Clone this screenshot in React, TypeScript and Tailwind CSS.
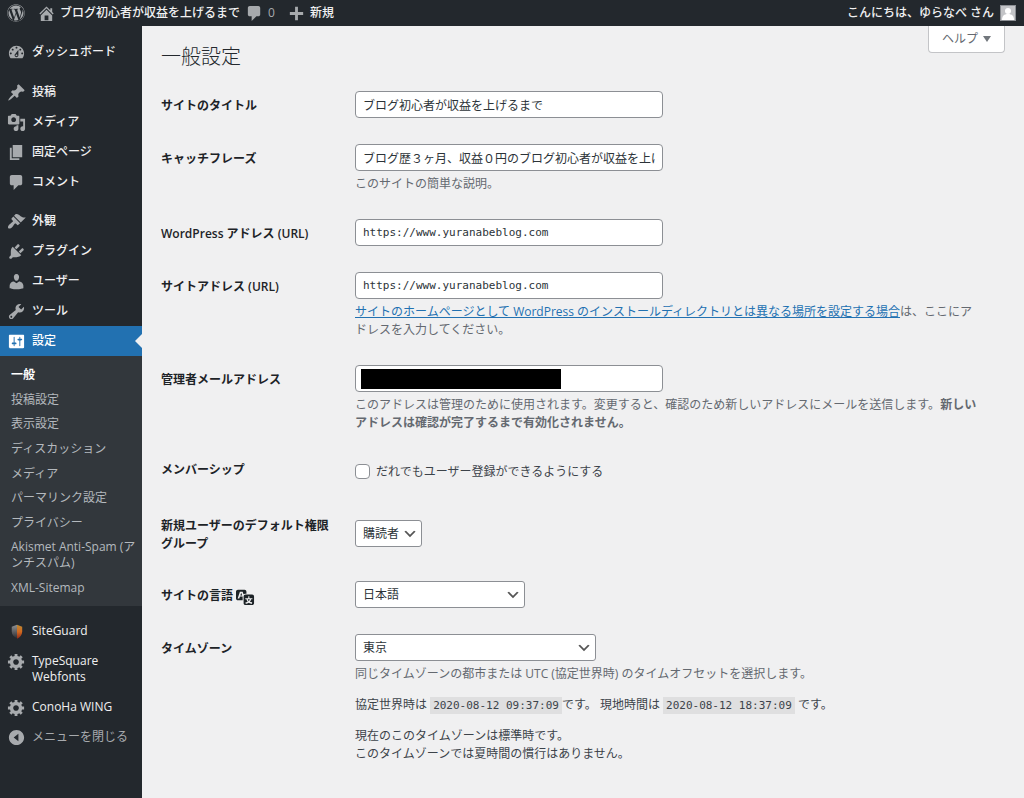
import type { ReactNode } from "react";
import { FaWordpress } from "react-icons/fa";

const icons = {
  home: "M16 8.5l1.53 1.53-1.06 1.06L10 4.6l-6.47 6.49-1.06-1.06L10 2.5l4 4v-2h2v4zm-6-2.46l6 5.99V18H4v-5.97zM12 17v-5H8v5h4z",
  comments: "M5 2h9c1.1 0 2 .9 2 2v7c0 1.1-.9 2-2 2h-2l-5 5v-5H5c-1.1 0-2-.9-2-2V4c0-1.1.9-2 2-2z",
  plus: "M17 8.5v3h-5.5V17h-3v-5.5H3v-3h5.5V3h3v5.5z",
  dashboard:
    "M3.76 16h12.48c1.1-1.37 1.76-3.11 1.76-5 0-4.42-3.58-8-8-8s-8 3.58-8 8c0 1.89.66 3.63 1.76 5zM10 4c.55 0 1 .45 1 1s-.45 1-1 1-1-.45-1-1 .45-1 1-1zM6 6c.55 0 1 .45 1 1s-.45 1-1 1-1-.45-1-1 .45-1 1-1zm8 0c.55 0 1 .45 1 1s-.45 1-1 1-1-.45-1-1 .45-1 1-1zm-5.37 5.55L12 7v6c0 1.1-.9 2-2 2s-2-.9-2-2c0-.57.24-1.08.63-1.45zM4 10c.55 0 1 .45 1 1s-.45 1-1 1-1-.45-1-1 .45-1 1-1zm12 0c.55 0 1 .45 1 1s-.45 1-1 1-1-.45-1-1 .45-1 1-1zm-5 3c0-.55-.45-1-1-1s-1 .45-1 1 .45 1 1 1 1-.45 1-1z",
  post: "M10.44 3.02l1.82-1.82 6.36 6.35-1.83 1.82c-1.05-.68-2.48-.57-3.41.36l-.75.75c-.92.93-1.04 2.35-.35 3.41l-1.83 1.82-2.41-2.41-2.8 2.79c-.42.42-3.38 2.71-3.8 2.29s1.86-3.39 2.28-3.81l2.79-2.79L4.1 9.36l1.83-1.82c1.05.69 2.48.57 3.4-.36l.75-.75c.93-.92 1.05-2.35.36-3.41z",
  media:
    "M13 11V4c0-.55-.45-1-1-1h-1.67L9 1H5L3.67 3H2c-.55 0-1 .45-1 1v7c0 .55.45 1 1 1h10c.55 0 1-.45 1-1zM7 4.5c1.38 0 2.5 1.12 2.5 2.5S8.38 9.5 7 9.5 4.5 8.38 4.5 7 5.62 4.5 7 4.5zM14 6h5v10.5c0 1.38-1.12 2.5-2.5 2.5S14 17.88 14 16.5s1.12-2.5 2.5-2.5c.17 0 .34.02.5.05V9h-3V6zm-4 8.05V13h2v3.5c0 1.38-1.12 2.5-2.5 2.5S7 17.88 7 16.5 8.12 14 9.5 14c.17 0 .34.02.5.05z",
  page: "M6 15V2h10v13H6zm-1 1h8v2H3V5h2v11z",
  appearance:
    "M14.48 11.06L7.41 3.99l1.5-1.5c.5-.56 2.3-.47 3.51.32 1.21.8 1.43 1.28 2.91 2.1 1.18.64 2.45 1.26 4.45.85zm-.71.71L6.7 4.7 4.93 6.47c-.39.39-.39 1.02 0 1.41l1.06 1.06c.39.39.39 1.03 0 1.42-.6.6-1.43 1.11-2.21 1.69-.35.26-.7.53-1.01.84C1.43 14.23.4 16.08 1.4 17.07c.99 1 2.84-.03 4.18-1.36.31-.31.58-.66.85-1.02.57-.78 1.08-1.61 1.69-2.21.39-.39 1.02-.39 1.41 0l1.06 1.06c.39.39 1.02.39 1.41 0z",
  plugins:
    "M13.11 4.36L9.87 7.6 8 5.73l3.24-3.24c.35-.34 1.05-.2 1.56.32.52.51.66 1.21.31 1.55zm-8 1.77l.91-1.12 9.01 9.01-1.19.84c-.71.71-2.63 1.16-3.82 1.16H6.14L4.9 17.26c-.59.59-1.54.59-2.12 0-.59-.58-.59-1.53 0-2.12l1.24-1.24v-3.88c0-1.13.4-3.19 1.09-3.89zm7.26 3.97l3.24-3.24c.34-.35 1.04-.21 1.55.31.52.51.66 1.21.31 1.55l-3.24 3.25z",
  users:
    "M10 9.25c-2.27 0-2.73-3.44-2.73-3.44C7 4.02 7.82 2 9.97 2c2.16 0 2.98 2.02 2.71 3.81 0 0-.41 3.44-2.68 3.44zm0 2.57L12.72 10c2.39 0 4.52 2.33 4.52 4.53v2.49s-3.65 1.13-7.24 1.13c-3.65 0-7.24-1.13-7.24-1.13v-2.49c0-2.25 1.94-4.48 4.47-4.48z",
  tools:
    "M16.68 9.77c-1.34 1.34-3.3 1.67-4.95.99l-5.41 6.52c-.99.99-2.59.99-3.58 0s-.99-2.59 0-3.57l6.52-5.42c-.68-1.65-.35-3.61.99-4.95 1.28-1.28 3.12-1.62 4.72-1.06l-2.89 2.89 2.82 2.82 2.86-2.87c.53 1.58.18 3.39-1.08 4.65zM3.81 16.21c.4.39 1.04.39 1.43 0 .4-.4.4-1.04 0-1.43-.39-.4-1.03-.4-1.43 0-.39.39-.39 1.03 0 1.43z",
  settings:
    "M18 16V4c0-.55-.45-1-1-1H3c-.55 0-1 .45-1 1v12c0 .55.45 1 1 1h14c.55 0 1-.45 1-1zM8 11h1c.55 0 1 .45 1 1s-.45 1-1 1H8v1.5c0 .28-.22.5-.5.5s-.5-.22-.5-.5V13H6c-.55 0-1-.45-1-1s.45-1 1-1h1V5.5c0-.28.22-.5.5-.5s.5.22.5.5V11zm5-2h-1c-.55 0-1-.45-1-1s.45-1 1-1h1V5.5c0-.28.22-.5.5-.5s.5.22.5.5V7h1c.55 0 1 .45 1 1s-.45 1-1 1h-1v5.5c0 .28-.22.5-.5.5s-.5-.22-.5-.5V9z",
  generic:
    "M18 12h-2.18c-.17.7-.44 1.35-.81 1.93l1.54 1.54-2.1 2.1-1.54-1.54c-.58.36-1.23.63-1.91.79V19H8v-2.18c-.68-.16-1.33-.43-1.91-.79l-1.54 1.54-2.12-2.12 1.54-1.54c-.36-.58-.63-1.23-.79-1.91H1V9.03h2.17c.16-.7.44-1.35.8-1.94L2.43 5.55l2.1-2.1 1.54 1.54c.58-.37 1.24-.64 1.93-.81V2h3v2.18c.68.16 1.33.43 1.91.79l1.54-1.54 2.12 2.12-1.54 1.54c.36.59.64 1.24.8 1.94H18V12zm-8.5 1.5c1.66 0 3-1.34 3-3s-1.34-3-3-3-3 1.34-3 3 1.34 3 3 3z",
  collapse: "M10 2c4.42 0 8 3.58 8 8s-3.58 8-8 8-8-3.58-8-8 3.58-8 8-8zm2 12V6l-5 4z",
};

type IconName = keyof typeof icons;

function Icon({ name, className = "" }: { name: IconName; className?: string }) {
  return (
    <svg
      viewBox="0 0 20 20"
      fill="currentColor"
      fillRule="evenodd"
      aria-hidden="true"
      className={`size-[19px] shrink-0 ${className}`}
    >
      <path d={icons[name]} />
    </svg>
  );
}

function ShieldIcon() {
  return (
    <svg viewBox="0 0 20 20" aria-hidden="true" className="size-[19px] shrink-0">
      <defs>
        <linearGradient id="shield-left" x1="0" y1="0" x2="0" y2="1">
          <stop offset="0" stopColor="#8f9193" />
          <stop offset="1" stopColor="#2f2f33" />
        </linearGradient>
        <linearGradient id="shield-right" x1="0" y1="0" x2="0" y2="1">
          <stop offset="0" stopColor="#b98a35" />
          <stop offset="0.5" stopColor="#d2691f" />
          <stop offset="1" stopColor="#8e2a1c" />
        </linearGradient>
      </defs>
      <path d="M5 5l5.500-2v14C7 15.500 5 13.500 5 10z" fill="url(#shield-left)" />
      <path d="M10.500 3L16 5v5c0 3.500-2 6-5.500 7.500z" fill="url(#shield-right)" />
    </svg>
  );
}

function TranslationIcon() {
  return (
    <svg viewBox="0 0 20 20" aria-hidden="true" className="-my-px size-[19px] shrink-0">
      <path
        d="M11 7H9.49c-.63 0-1.25.3-1.59.7L7 5H4.13l-2.39 7h1.69l.74-2H7v4H2c-1.100 0-2-.9-2-2V5c0-1.100.9-2 2-2h7c1.100 0 2 .9 2 2v2zM6.51 9H4.49l1-2.93zM10 8h7c1.100 0 2 .9 2 2v7c0 1.100-.9 2-2 2h-7c-1.100 0-2-.9-2-2v-7c0-1.100.9-2 2-2zm7.250 5v-1.080h-3.170V9.750h-1.160v2.170H9.750V13h1.280c.11.850.56 1.850 1.280 2.620-.87.36-1.890.62-2.310.62-.01.02.22.97.2 1.460.84 0 2.210-.5 3.280-1.150 1.090.65 2.480 1.150 3.340 1.150-.02-.49.2-1.440.2-1.460-.43 0-1.490-.27-2.380-.63.7-.77 1.140-1.770 1.250-2.610h1.360zm-3.810 1.930c-.5-.46-.85-1.130-1.010-1.930h2.090c-.17.8-.51 1.470-1 1.930l-.04.03s-.03-.02-.04-.03z"
        fill="#1d2327"
        fillRule="evenodd"
      />
    </svg>
  );
}

function MenuItem({ icon, children }: { icon: ReactNode; children: ReactNode }) {
  return (
    <li>
      <a href="#" className="flex gap-[6px] py-[7px] pl-[7px] leading-4 text-[#f0f0f1]">
        <span className="-my-px flex h-[18px] items-center text-[#a7aaad]">{icon}</span>
        <span>{children}</span>
      </a>
    </li>
  );
}

const submenu = [
  "投稿設定",
  "表示設定",
  "ディスカッション",
  "メディア",
  "パーマリンク設定",
  "プライバシー",
  "Akismet Anti-Spam (アンチスパム)",
  "XML-Sitemap",
];

function Sidebar() {
  return (
    <nav className="w-[142px] shrink-0 bg-[#23282d] pt-[11px] text-[12px] font-medium">
      <ul>
        <MenuItem icon={<Icon name="dashboard" />}>ダッシュボード</MenuItem>
      </ul>
      <ul className="mt-[10px]">
        <MenuItem icon={<Icon name="post" />}>投稿</MenuItem>
        <MenuItem icon={<Icon name="media" />}>メディア</MenuItem>
        <MenuItem icon={<Icon name="page" />}>固定ページ</MenuItem>
        <MenuItem icon={<Icon name="comments" />}>コメント</MenuItem>
      </ul>
      <ul className="mt-[9px]">
        <MenuItem icon={<Icon name="appearance" />}>外観</MenuItem>
        <MenuItem icon={<Icon name="plugins" />}>プラグイン</MenuItem>
        <MenuItem icon={<Icon name="users" />}>ユーザー</MenuItem>
        <MenuItem icon={<Icon name="tools" />}>ツール</MenuItem>
        <li>
          <a
            href="#"
            aria-current="page"
            className="relative flex gap-[6px] bg-[#2271b1] py-[7px] pl-[7px] leading-4 text-white"
          >
            <span className="-my-px flex h-[18px] items-center">
              <Icon name="settings" />
            </span>
            設定
            <span className="absolute top-[8px] right-0 border-y-[7px] border-r-[7px] border-y-transparent border-r-[#f0f0f1]" />
          </a>
          <ul className="flex min-h-[250px] flex-col justify-between bg-[#32373c] pt-[7px] pb-[6px] leading-4 font-normal text-[#b4b9be]">
            <li>
              <a href="#" className="block py-[4px] pr-[4px] pl-[11px] font-bold text-white">
                一般
              </a>
            </li>
            {submenu.map((label) => (
              <li key={label}>
                <a href="#" className="block py-[4px] pr-[4px] pl-[11px]">
                  {label}
                </a>
              </li>
            ))}
          </ul>
        </li>
      </ul>
      <ul className="mt-[10px]">
        <MenuItem icon={<ShieldIcon />}>SiteGuard</MenuItem>
        <MenuItem icon={<Icon name="generic" />}>
          TypeSquare
          <br />
          Webfonts
        </MenuItem>
        <MenuItem icon={<Icon name="generic" />}>ConoHa WING</MenuItem>
      </ul>
      <button
        type="button"
        className="flex gap-[6px] py-[7px] pl-[7px] leading-4 font-normal text-[#a7aaad]"
      >
        <span className="-my-px flex h-[18px] items-center">
          <Icon name="collapse" />
        </span>
        メニューを閉じる
      </button>
    </nav>
  );
}

function AdminBar() {
  return (
    <header className="flex h-[26px] items-center bg-[#23282d] text-[12px] font-medium text-[#f0f0f1]">
      <a href="#" aria-label="WordPress" className="ml-[7px] text-[#a7aaad]">
        <FaWordpress className="size-[18px]" />
      </a>
      <a href="#" className="ml-[12px] flex items-center gap-[4px]">
        <Icon name="home" className="text-[#a7aaad]" />
        ブログ初心者が収益を上げるまで
      </a>
      <a href="#" className="ml-[5px] flex items-center gap-[4px] text-[#a7aaad]">
        <Icon name="comments" />0
      </a>
      <a href="#" className="ml-[12px] flex items-center gap-[4px]">
        <Icon name="plus" className="text-[#a7aaad]" />
        新規
      </a>
      <a href="#" className="mr-[8px] ml-auto flex items-center gap-[6px]">
        こんにちは、ゆらなべ さん
        <svg viewBox="0 0 16 16" aria-hidden="true" className="size-4">
          <path d="M0 0h16v16H0z" fill="#8c8f94" />
          <path d="M1 1h14v14H1z" fill="#c3c4c7" />
          <circle cx="8" cy="6" r="3" fill="#fff" />
          <path d="M2 15c0-4 2-6 6-6s6 2 6 6z" fill="#fff" />
        </svg>
      </a>
    </header>
  );
}

function Row({
  id,
  label,
  className,
  children,
}: {
  id?: string;
  label: ReactNode;
  className: string;
  children: ReactNode;
}) {
  return (
    <tr className="align-top">
      <th
        scope="row"
        className="w-[194px] pt-[6px] pr-2 text-left leading-[18px] font-semibold text-[#1d2327]"
      >
        {id ? <label htmlFor={id}>{label}</label> : label}
      </th>
      <td className={className}>{children}</td>
    </tr>
  );
}

const field =
  "block h-[27px] w-[308px] rounded-[4px] border border-[#8c8f94] bg-white px-[7px] text-[#2c3338]";

function Select({ id, width, options }: { id: string; width: string; options: string[] }) {
  return (
    <div className={`relative ${width}`}>
      <select
        id={id}
        className="block h-[27px] w-full appearance-none rounded-[3px] border border-[#8c8f94] bg-white pr-5 pl-[7px] text-[#2c3338]"
      >
        {options.map((option) => (
          <option key={option}>{option}</option>
        ))}
      </select>
      <svg
        viewBox="0 0 20 20"
        aria-hidden="true"
        className="pointer-events-none absolute top-[6px] right-[4px] size-4"
      >
        <path d="M5 6l5 5 5-5 2 1-7 7-7-7 2-1z" fill="#555" />
      </svg>
    </div>
  );
}

function Code({ children }: { children: ReactNode }) {
  return (
    <code className="bg-[#dfdfe0] px-[3px] py-[2px] font-['DejaVu_Sans_Mono',monospace] text-[11px]">
      {children}
    </code>
  );
}

export default function App() {
  return (
    <div className="flex min-h-screen flex-col bg-[#f0f0f1] font-['Open_Sans','Noto_Sans_CJK_JP',sans-serif] text-[12px] text-[#3c434a]">
      <AdminBar />
      <div className="flex flex-1">
        <Sidebar />
        <main className="relative min-w-0 flex-1 pt-[17px] pr-[19px] pl-[19px]">
          <button
            type="button"
            className="absolute top-0 right-[19px] flex h-[27px] items-center gap-[5px] rounded-b-[4px] border border-t-0 border-[#c3c4c7] bg-white px-[13px] text-[#646970]"
          >
            ヘルプ
            <svg viewBox="0 0 8 6" aria-hidden="true" className="h-[6px] w-2">
              <path d="M0 0h8L4 6z" fill="#72777c" />
            </svg>
          </button>
          <h1 className="text-[20px] leading-[28px] font-light text-[#23282d]">一般設定</h1>
          <form className="mt-5">
            <table className="w-full table-fixed">
              <tbody>
                <Row id="title" label="サイトのタイトル" className="pb-[26px]">
                  <input
                    id="title"
                    type="text"
                    className={field}
                    defaultValue="ブログ初心者が収益を上げるまで"
                  />
                </Row>
                <Row id="tagline" label="キャッチフレーズ" className="pb-[26px]">
                  <input
                    id="tagline"
                    type="text"
                    className={field}
                    defaultValue="ブログ歴３ヶ月、収益０円のブログ初心者が収益を上げるまで"
                  />
                  <p className="mt-[4px] leading-[18px] text-[#646970]">このサイトの簡単な説明。</p>
                </Row>
                <Row id="wpurl" label="WordPress アドレス (URL)" className="pb-[26px]">
                  <input
                    id="wpurl"
                    type="url"
                    className={`${field} font-['DejaVu_Sans_Mono',monospace] text-[11px]`}
                    defaultValue="https://www.yuranabeblog.com"
                  />
                </Row>
                <Row id="siteurl" label="サイトアドレス (URL)" className="pb-[26px]">
                  <input
                    id="siteurl"
                    type="url"
                    className={`${field} font-['DejaVu_Sans_Mono',monospace] text-[11px]`}
                    defaultValue="https://www.yuranabeblog.com"
                  />
                  <p className="mt-[4px] leading-[18px] text-[#646970]">
                    <a href="#" className="text-[#2271b1] underline">
                      サイトのホームページとして WordPress のインストールディレクトリとは異なる場所を設定する場合
                    </a>
                    は、ここにア
                    <br />
                    ドレスを入力してください。
                  </p>
                </Row>
                <Row id="email" label="管理者メールアドレス" className="pb-[23px]">
                  <div className="relative">
                    <input id="email" type="email" className={field} />
                    <span className="absolute top-[4px] left-[6px] h-[20px] w-[200px] bg-black" />
                  </div>
                  <p className="mt-[4px] leading-[18px] text-[#646970]">
                    このアドレスは管理のために使用されます。変更すると、確認のため新しいアドレスにメールを送信します。
                    <strong>
                      新しい
                      <br />
                      アドレスは確認が完了するまで有効化されません。
                    </strong>
                  </p>
                </Row>
                <Row label="メンバーシップ" className="pt-[3px] pb-[26px]">
                  <label className="flex h-[27px] items-center gap-[6px]">
                    <input
                      type="checkbox"
                      className="size-[15px] appearance-none rounded-[4px] border border-[#8c8f94] bg-white"
                    />
                    だれでもユーザー登録ができるようにする
                  </label>
                </Row>
                <Row
                  id="role"
                  label={
                    <>
                      新規ユーザーのデフォルト権限
                      <br />
                      グループ
                    </>
                  }
                  className="pt-[9px] pb-[34px]"
                >
                  <Select id="role" width="w-[67px]" options={["購読者"]} />
                </Row>
                <Row
                  id="lang"
                  label={
                    <span className="flex items-center gap-[3px]">
                      サイトの言語
                      <TranslationIcon />
                    </span>
                  }
                  className="pb-[26px]"
                >
                  <Select id="lang" width="w-[170px]" options={["日本語"]} />
                </Row>
                <Row id="timezone" label="タイムゾーン" className="pb-[26px]">
                  <Select id="timezone" width="w-[241px]" options={["東京"]} />
                  <p className="mt-[4px] leading-[18px] text-[#646970]">
                    同じタイムゾーンの都市または UTC (協定世界時) のタイムオフセットを選択します。
                  </p>
                  <p className="mt-[13px] leading-[18px]">
                    協定世界時は <Code>2020-08-12 09:37:09</Code>です。 現地時間は{" "}
                    <Code>2020-08-12 18:37:09</Code> です。
                  </p>
                  <p className="mt-[12px] leading-[18px]">
                    現在のこのタイムゾーンは標準時です。
                    <br />
                    このタイムゾーンでは夏時間の慣行はありません。
                  </p>
                </Row>
              </tbody>
            </table>
          </form>
        </main>
      </div>
    </div>
  );
}
